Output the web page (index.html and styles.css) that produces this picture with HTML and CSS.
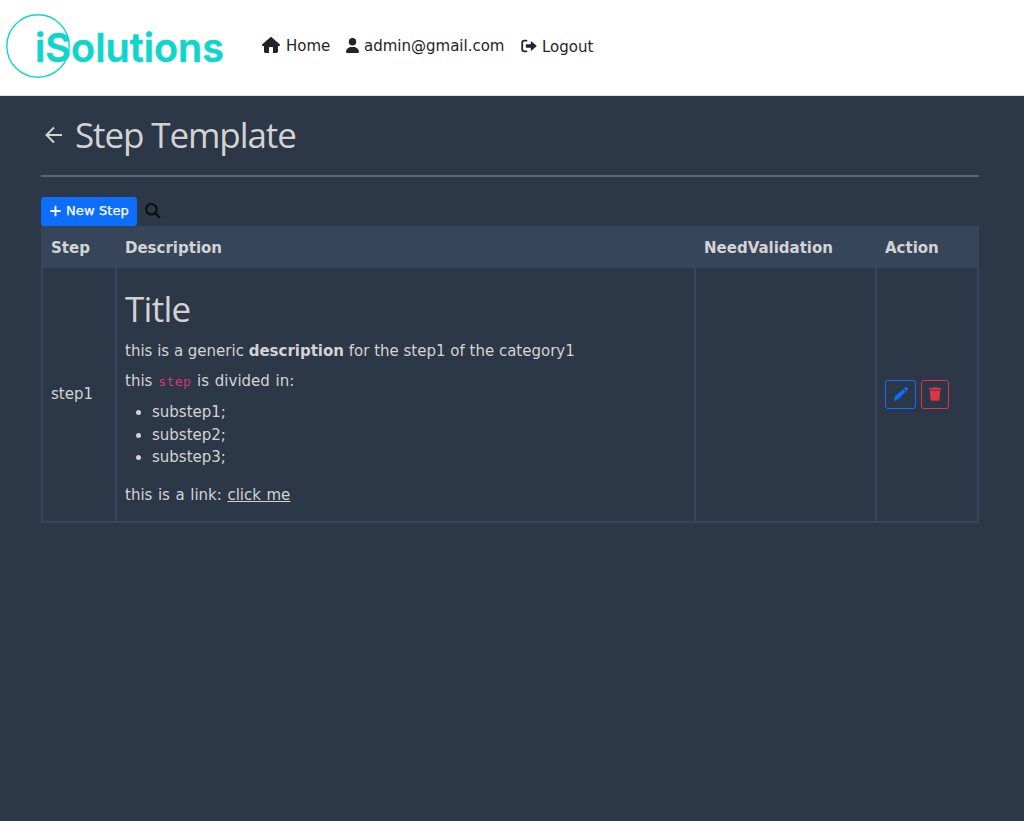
FILE: index.html
```html
<!DOCTYPE html>
<html lang="en">
<head>
<meta charset="utf-8">
<title>Step Template</title>
<link rel="stylesheet" href="styles.css">
</head>
<body>
<header class="navbar">
  <svg class="logo" width="228" height="86" viewBox="0 0 228 86" role="img" aria-label="iSolutions">
    <circle class="logo-ring" cx="38" cy="46" r="31.2"/>
    <text class="logo-text" x="35" y="61.5" textLength="189" lengthAdjust="spacingAndGlyphs">iSolutions</text>
  </svg>
  <nav class="nav">
    <a class="nav-item home"><svg width="18" height="16" viewBox="0 0 576 512"><path d="M575.8 255.5c0 18-15 32.1-32 32.1h-32l.7 160.200c0 36-22 64.200-48 64.200H352V352c0-18-14-32-32-32h-64c-18 0-32 14-32 32v160H112c-26 0-48-22-48-48V287.600H32c-18 0-32-14-32-32.100 0-9 3-17 10-24L266.400 8c7-7 15-8 22-8s15 2 21 7l255.400 224.500c8 7 12 15 11 24z"/></svg>Home</a>
    <a class="nav-item user"><svg width="13" height="15" viewBox="0 0 448 512"><path d="M224 256a128 128 0 1 0 0-256 128 128 0 1 0 0 256zm-45.700 48C79.800 304 0 383.800 0 482.300 0 498.700 13.300 512 29.700 512h388.600c16.400 0 29.700-13.300 29.700-29.700 0-98.500-79.800-178.300-178.300-178.300z"/></svg>admin@gmail.com</a>
    <a class="nav-item logout"><svg width="16" height="14" viewBox="0 0 16 14"><path class="door" d="M5.500 1.700H3.200Q1.200 1.700 1.200 3.700v6.600q0 2 2 2h2.300"/><path d="M5.500 5.200H9.800V3q0-1 .8-.4l4.700 3.900q.5.500 0 1l-4.700 3.900q-.8.600-.8-.4V8.800H5.500q-.7 0-.7-.7V5.900q0-.7.700-.7z"/></svg>Logout</a>
  </nav>
</header>
<main class="content">
  <div class="page-head">
    <svg class="back" width="18" height="18" viewBox="0 0 18 18"><path d="M17 9H1.800M9 1.500L1.500 9L9 16.500"/></svg>
    <h1 class="heading">Step Template</h1>
  </div>
  <hr class="rule">
  <div class="toolbar">
    <button class="new-step"><svg width="11" height="12" viewBox="0 0 11 12"><path d="M5.500 .8v10.400M.3 6h10.400"/></svg>New Step</button>
    <svg class="search" width="16" height="16" viewBox="0 0 16 16"><circle cx="6.400" cy="6.300" r="5.300"/><path d="M10.300 10.200l4.600 4.600"/></svg>
  </div>
  <table class="steps">
    <colgroup><col class="c-step"><col class="c-desc"><col class="c-valid"><col class="c-action"></colgroup>
    <thead><tr><th>Step</th><th>Description</th><th>NeedValidation</th><th>Action</th></tr></thead>
    <tbody><tr>
      <td>step1</td>
      <td class="desc">
        <h2 class="heading title">Title</h2>
        <p class="intro">this is a generic <strong>description</strong> for the step1 of the category1</p>
        <p class="divided">this <code>step</code> is divided in:</p>
        <ul class="list"><li>substep1;</li><li>substep2;</li><li>substep3;</li></ul>
        <p class="link-line">this is a link: <a class="link">click me</a></p>
      </td>
      <td></td>
      <td><div class="actions">
        <button class="icon-btn edit"><svg width="14" height="14" viewBox="0 0 512 512"><path d="M400 19c25-25 60-25 85 0l8 8c25 25 25 60 0 85l-44 44-93-93zM337 83l92 92-238 238c-11 11-24 19-39 23L25 511c-15 5-29-9-24-24L27 361c4-15 12-28 23-39z"/></svg></button>
        <button class="icon-btn del"><svg width="12" height="14" viewBox="0 0 12 14"><path d="M4 .2h4l.7.900h2.600q.7 0 .7.800v.8H0v-.8q0-.8.700-.8h2.600zM.8 3.500h10.400l-.7 9.100q-.1 1.200-1.300 1.200H2.800q-1.200 0-1.300-1.200z"/></svg></button>
      </div></td>
    </tr></tbody>
  </table>
</main>
</body>
</html>
```
FILE: styles.css
```css
* { box-sizing: border-box; }
body {
  margin: 0;
  min-height: 821px;
  background: #2c3747;
  color: #d3d3d3;
  font: 15px/22.5px Verdana, "DejaVu Sans", sans-serif;
}
svg { flex: none; fill: currentColor; }
h1, h2, p, ul { margin: 0; }
.navbar {
  display: flex;
  height: 96px;
  background: #fff;
  border-bottom: 1px solid #dee2e6;
  color: #212529;
}
.logo { color: #10d5cb; margin-right: 34px; }
.logo-ring { fill: none; stroke: currentColor; stroke-width: 1.4; }
.logo-text { font: 600 40px Inter, sans-serif; stroke: currentColor; stroke-width: .5; }
.nav { display: flex; align-items: flex-start; padding-top: 35px; }
.nav-item { display: flex; align-items: center; }
.nav-item svg { position: relative; top: -1px; }
.home { gap: 6px; width: 84px; }
.user { gap: 5px; width: 175px; }
.logout { gap: 5px; padding-top: 1px; }
.door { fill: none; stroke: currentColor; stroke-width: 1.8; stroke-linecap: round; }
.content { padding: 17px 45px 0 41px; }
.page-head { display: flex; align-items: center; height: 43px; padding-left: 4px; gap: 12px; }
.back { fill: none; stroke: currentColor; stroke-width: 2; }
.heading { font: 400 35px/41px "Segoe UI", "Open Sans", sans-serif; letter-spacing: -1.1px; }
.title { letter-spacing: -.7px; }
.rule { height: 2px; margin: 19px 0 20px; border: 0; background: #5b6471; }
.toolbar { display: flex; align-items: flex-start; height: 29px; gap: 8px; }
.new-step {
  display: flex;
  align-items: center;
  gap: 5px;
  width: 96px;
  height: 29px;
  padding: 0 0 2px 9px;
  border: 0;
  border-radius: 3px;
  background: #0d6efd;
  color: #fff;
  font: 13px/20px Verdana, "DejaVu Sans", sans-serif;
  letter-spacing: .1px;
  white-space: nowrap;
  -webkit-text-stroke: .25px currentColor;
}
.new-step svg { stroke: currentColor; stroke-width: 1.8; }
.search { fill: none; stroke: #0b0d10; stroke-width: 2; margin-top: 6px; }
.steps { width: 938px; table-layout: fixed; border-collapse: collapse; }
.c-step { width: 74px; }
.c-desc { width: 579px; }
.c-valid { width: 181px; }
.c-action { width: 102px; }
th, td { border: 2px solid #37455b; padding: 0 8px; text-align: left; }
th { height: 40px; padding-top: 2px; background: #37455b; font-weight: 700; }
td { height: 255px; vertical-align: middle; }
.desc { vertical-align: top; padding-top: 20px; }
.intro { margin-top: 11px; }
.divided { height: 22.5px; margin-top: 7.5px; word-spacing: 1px; }
code { color: #d63384; font: 13.125px/1 "DejaVu Sans Mono", monospace; letter-spacing: .4px; }
.list { margin-top: 8.5px; padding-left: 27px; }
.link-line { margin-top: 15px; word-spacing: .8px; }
.link { text-decoration: underline; }
.actions { display: flex; gap: 5px; padding-bottom: 1px; }
.icon-btn {
  display: flex;
  align-items: center;
  justify-content: center;
  height: 29px;
  padding: 0;
  border: 1px solid currentColor;
  border-radius: 3px;
  background: none;
}
.edit { width: 31px; color: #0d6efd; }
.del { width: 28px; color: #dc3545; }
```
